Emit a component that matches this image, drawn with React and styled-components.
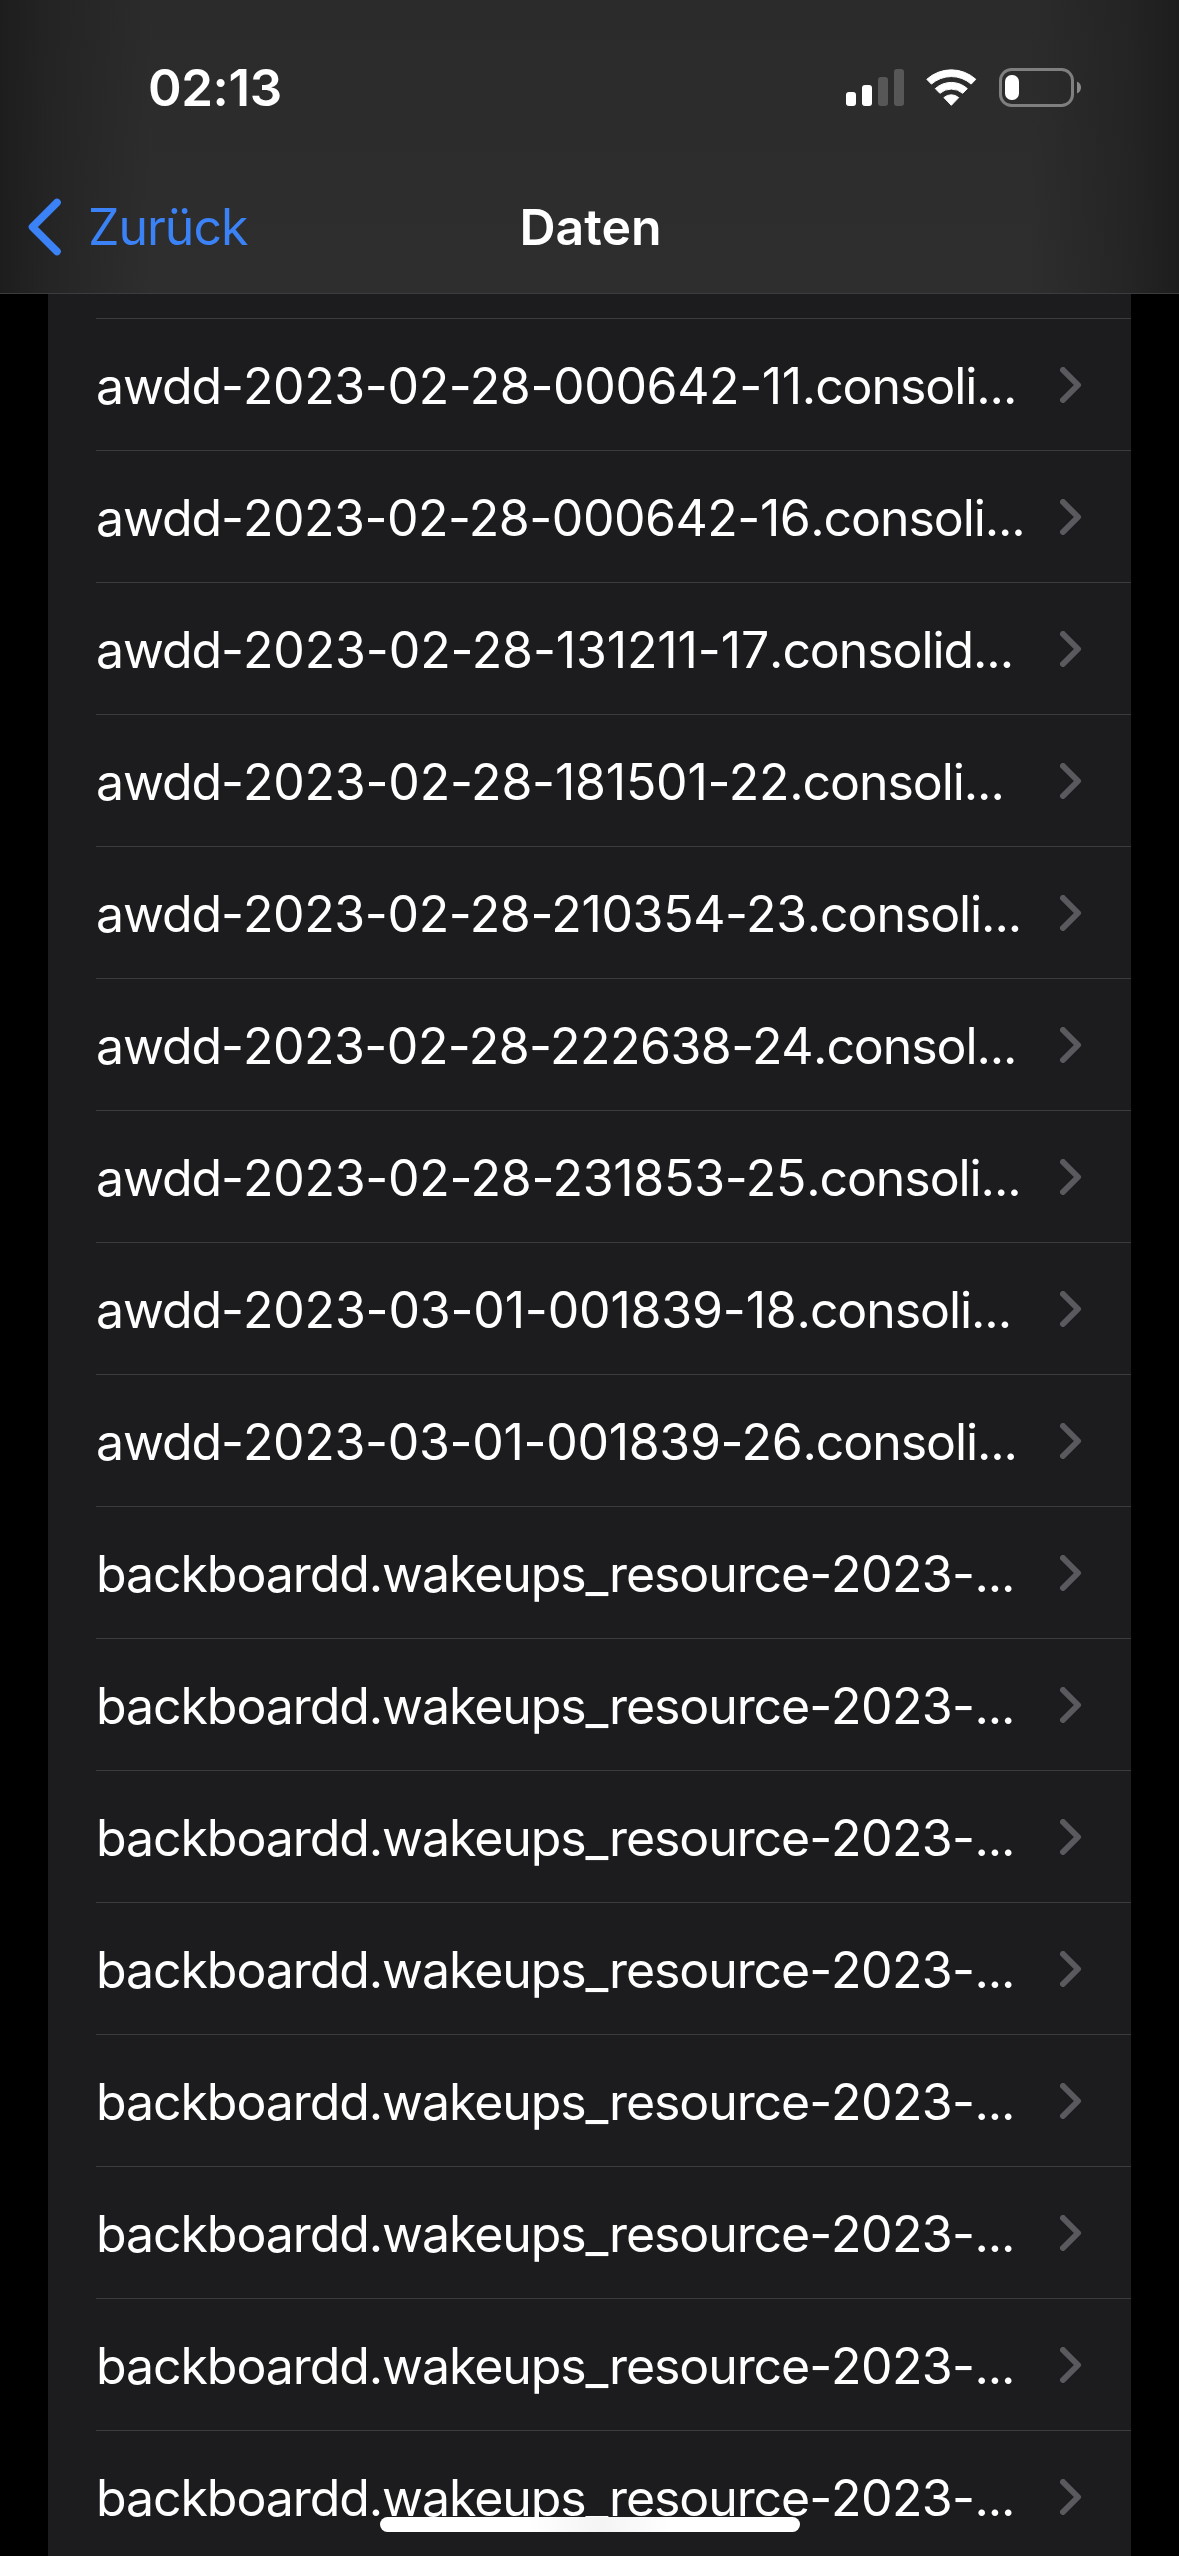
import React from 'react';
import styled, { createGlobalStyle } from 'styled-components';

const Global = createGlobalStyle`
  *, *::before, *::after { box-sizing: border-box; }
  html, body { margin: 0; background: #000; }
  body { overflow: hidden; font-family: Inter, "Liberation Sans", sans-serif; color: #fff; }
`;

const Screen = styled.div`
  width: 1179px;
  height: 2556px;
  background: #000;
  overflow: hidden;
  position: relative;
  display: flex;
  flex-direction: column;
`;

const Header = styled.header`
  flex: none;
  height: 294px;
  border-bottom: 1px solid #3c3c3e;
  background:
    linear-gradient(90deg, #1d1d1d 0, rgba(32, 32, 32, 0.65) 50px, rgba(44, 44, 44, 0) 150px, rgba(44, 44, 44, 0) 1029px, rgba(32, 32, 32, 0.65) 1129px, #1d1d1d 1179px),
    linear-gradient(180deg, #2b2b2b, #2e2e2e);
`;

const StatusBar = styled.div`
  height: 176px;
  padding: 0 97px 0 148px;
  display: flex;
  align-items: center;
  justify-content: space-between;
`;

const Clock = styled.time`
  font-size: 51px;
  font-weight: 600;
  line-height: 60px;
  letter-spacing: -0.4px;
`;

const StatusIcons = styled.div`
  display: flex;
  align-items: center;
  gap: 22px;
`;

const NavBar = styled.nav`
  height: 117px;
  padding: 0 28px;
  display: grid;
  grid-template-columns: 1fr auto 1fr;
  align-items: start;
`;

const Back = styled.a`
  display: flex;
  align-items: center;
  gap: 26px;
  height: 102px;
  color: #3b82f7;
  font-size: 50px;
  letter-spacing: -1px;
`;

const Title = styled.h1`
  margin: 0;
  padding-left: 2px;
  font-size: 50px;
  font-weight: 600;
  line-height: 102px;
`;

const List = styled.ul`
  list-style: none;
  margin: 0 48px;
  padding: 24px 0 0 48px;
  background: #1c1c1e;
  flex: 1;
  min-height: 0;
`;

const Row = styled.li`
  height: 132px;
  padding-right: 49px;
  display: flex;
  align-items: center;
  justify-content: space-between;
  border-top: 1px solid #3b3b3d;
`;

const Label = styled.span`
  padding-top: 2px;
  font-size: 50px;
  line-height: 60px;
  white-space: nowrap;
  letter-spacing: -1.08px;
`;

const Stamp = styled.span`
  letter-spacing: ${(p) => p.$tracking}px;
`;

const HomeIndicator = styled.div`
  position: absolute;
  left: 380px;
  bottom: 24px;
  width: 420px;
  height: 15px;
  border-radius: 8px;
  background: linear-gradient(90deg, #fff 35%, #f4f4f4 53%, #fff 70%);
`;

const files = [
  { head: 'awdd-', stamp: '2023-02-28-000642-11', tail: '.consoli...', tracking: -0.37 },
  { head: 'awdd-', stamp: '2023-02-28-000642-16', tail: '.consoli...', tracking: -0.48 },
  { head: 'awdd-', stamp: '2023-02-28-131211-17', tail: '.consolid...', tracking: -0.12 },
  { head: 'awdd-', stamp: '2023-02-28-181501-22', tail: '.consoli...', tracking: -0.2 },
  { head: 'awdd-', stamp: '2023-02-28-210354-23', tail: '.consoli...', tracking: -0.37 },
  { head: 'awdd-', stamp: '2023-02-28-222638-24', tail: '.consol...', tracking: -0.5 },
  { head: 'awdd-', stamp: '2023-02-28-231853-25', tail: '.consoli...', tracking: -0.27 },
  { head: 'awdd-', stamp: '2023-03-01-001839-18', tail: '.consoli...', tracking: -0.18 },
  { head: 'awdd-', stamp: '2023-03-01-001839-26', tail: '.consoli...', tracking: -0.31 },
  ...Array.from({ length: 8 }, () => ({
    head: 'backboardd.wakeups_resource-',
    stamp: '2023-',
    tail: '...',
    tracking: -0.6,
  })),
];

const Signal = () => (
  <svg width="58" height="38" viewBox="0 0 58 38">
    <rect x="0" y="23" width="10" height="14" rx="3" fill="#fff" />
    <rect x="16" y="16" width="10" height="21" rx="3" fill="#fff" />
    <rect x="32" y="8" width="10" height="29" rx="3" fill="#575757" />
    <rect x="48" y="0" width="10" height="37" rx="3" fill="#575757" />
  </svg>
);

const Wifi = () => (
  <svg width="51" height="38" viewBox="0 0 51 38" fill="#fff" stroke="#fff" strokeWidth="1" strokeLinejoin="round">
    <path d="M0.800 10.300A36.500 36.500 0 0 1 49.800 10.300L45.200 15.100A30 30 0 0 0 5.400 15.100Z" />
    <path d="M9.300 19.600A23.800 23.800 0 0 1 41.300 19.600L36.700 24.300A17.500 17.500 0 0 0 13.900 24.300Z" />
    <path d="M17.900 28.600A11.200 11.200 0 0 1 32.700 28.600L25.300 36.300Z" />
  </svg>
);

const Battery = () => (
  <svg width="83" height="40" viewBox="0 0 83 40">
    <rect x="1.500" y="1.500" width="72" height="36" rx="11" fill="none" stroke="#7f7f7f" strokeWidth="3" />
    <rect x="6" y="7" width="14" height="25" rx="6.500" fill="#fff" />
    <path d="M78 13.500c2.400 1 4 3.300 4 6s-1.600 5-4 6z" fill="#8a8a8a" />
  </svg>
);

const BackChevron = () => (
  <svg width="34" height="58" viewBox="0 0 34 58" fill="none" stroke="currentColor" strokeWidth="7.600" strokeLinecap="round" strokeLinejoin="round">
    <path d="M29 4.500L4.500 29L29 53.500" />
  </svg>
);

const Disclosure = () => (
  <svg width="22" height="36" viewBox="0 0 22 36" fill="none" stroke="#5a5a5e" strokeWidth="6" strokeLinecap="round" strokeLinejoin="round">
    <path d="M3 3L18 18L3 33" />
  </svg>
);

export default function App() {
  return (
    <Screen>
      <Global />
      <Header>
        <StatusBar>
          <Clock>02:13</Clock>
          <StatusIcons>
            <Signal />
            <Wifi />
            <Battery />
          </StatusIcons>
        </StatusBar>
        <NavBar>
          <Back>
            <BackChevron />
            Zurück
          </Back>
          <Title>Daten</Title>
        </NavBar>
      </Header>
      <List>
        {files.map(({ head, stamp, tail, tracking }, i) => (
          <Row key={i}>
            <Label>
              {head}
              <Stamp $tracking={tracking}>{stamp}</Stamp>
              {tail}
            </Label>
            <Disclosure />
          </Row>
        ))}
      </List>
      <HomeIndicator />
    </Screen>
  );
}
